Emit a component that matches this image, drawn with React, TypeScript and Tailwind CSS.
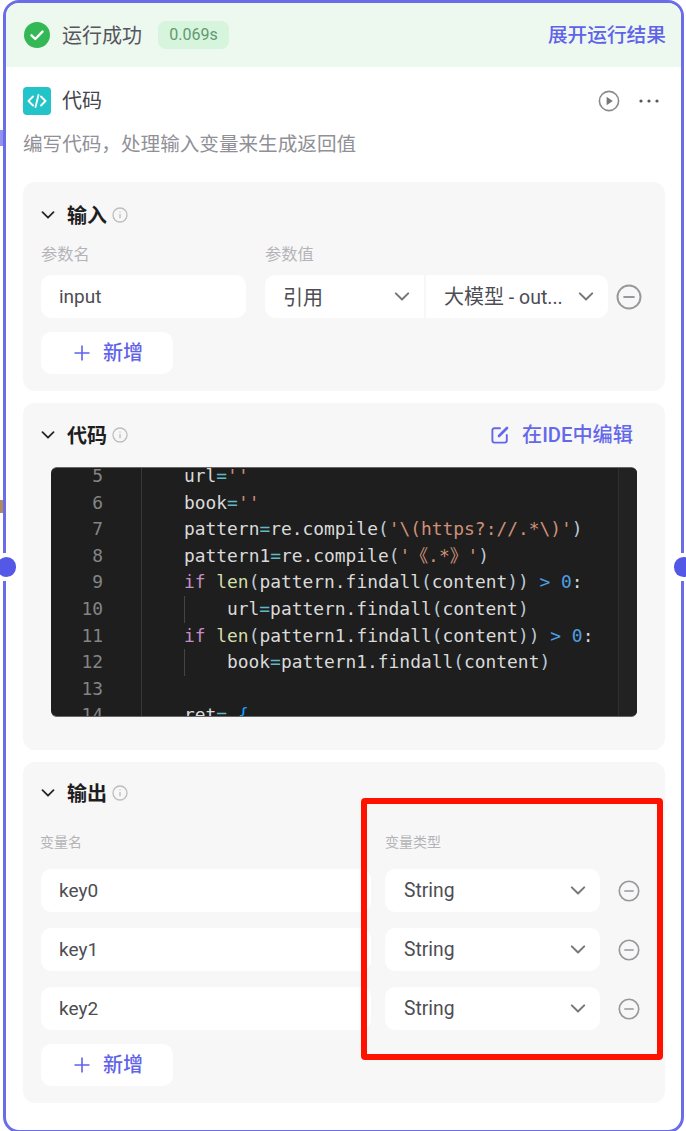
import type { ReactNode } from "react";

type Token = [string, string];

const P = "text-[#dadada]";
const O = "text-[#62b8c4]";
const K = "text-[#c58fc4]";
const L = "text-[#d5dfa8]";
const S = "text-[#ce9178]";
const R = "text-[#bcc9d6]";
const B = "text-[#179fff]";
const N = "text-[#4f9fe0]";

// tokens of each visible code line, indent is drawn as a guide
const CODE: { no: number; indent?: boolean; tokens: Token[] }[] = [
  { no: 5, tokens: [["url", P], ["=", O], ["''", S]] },
  { no: 6, tokens: [["book", P], ["=", O], ["''", S]] },
  { no: 7, tokens: [["pattern", P], ["=", O], ["re.compile", P], ["(", R], ["'\\(https?://.*\\)'", S], [")", R]] },
  { no: 8, tokens: [["pattern1", P], ["=", O], ["re.compile", P], ["(", R], ["'《.*》'", S], [")", R]] },
  { no: 9, tokens: [["if ", K], ["len", L], ["(", R], ["pattern.findall", P], ["(", R], ["content", P], ["))", R], [" > ", N], ["0", N], [":", P]] },
  { no: 10, indent: true, tokens: [["url", P], ["=", O], ["pattern.findall", P], ["(", R], ["content", P], [")", R]] },
  { no: 11, tokens: [["if ", K], ["len", L], ["(", R], ["pattern1.findall", P], ["(", R], ["content", P], ["))", R], [" > ", N], ["0", N], [":", P]] },
  { no: 12, indent: true, tokens: [["book", P], ["=", O], ["pattern1.findall", P], ["(", R], ["content", P], [")", R]] },
  { no: 13, tokens: [] },
  { no: 14, tokens: [["ret", P], ["= ", O], ["{", B]] },
];

const Chevron = ({ className }: { className: string }) => (
  <svg viewBox="0 0 14 8" className={className} fill="none" stroke="currentColor" strokeWidth="1.8" strokeLinecap="round" strokeLinejoin="round">
    <path d="M1.5 1.2 7 6.7l5.5-5.5" />
  </svg>
);

const InfoIcon = () => (
  <svg viewBox="0 0 16 16" className="w-4 h-4 text-[#bdbdbd]" fill="none" stroke="currentColor">
    <circle cx="8" cy="8" r="7" strokeWidth="1.3" />
    <path d="M8 7v4.2M8 4.4v1" strokeWidth="1.3" />
  </svg>
);

const MinusCircle = ({ size }: { size: string }) => (
  <svg viewBox="0 0 24 24" className={`${size} text-[#98989c]`} fill="none" stroke="currentColor" strokeWidth="1.8">
    <circle cx="12" cy="12" r="10.6" />
    <path d="M7.5 12h9" strokeLinecap="round" />
  </svg>
);

const PlusIcon = () => (
  <svg viewBox="0 0 16 16" className="w-4 h-4 text-[#5f63ea]" fill="none" stroke="currentColor" strokeWidth="1.6">
    <path d="M8 0.5v15M0.5 8h15" />
  </svg>
);

const AddButton = ({ className }: { className: string }) => (
  <div className={`w-[132px] h-[42px] bg-white rounded-[10px] flex items-center pl-[33px] gap-[13px] ${className}`}>
    <PlusIcon />
    <span className="text-[20px] leading-none font-medium text-[#5f63ea]">新增</span>
  </div>
);

const PanelTitle = ({ title, right }: { title: string; right?: ReactNode }) => (
  <div className="h-[28px] flex items-center">
    <Chevron className="w-[14px] h-[8px] text-[#26262b]" />
    <span className="ml-[12px] pt-[2px] text-[20px] leading-none font-semibold text-[#1d1d22]">{title}</span>
    <span className="ml-[5px]"><InfoIcon /></span>
    {right}
  </div>
);

const Field = ({ text, className }: { text: string; className: string }) => (
  <div className={`h-[43px] bg-white rounded-[10px] flex items-center pl-[18px] pt-[2px] text-[19px] text-[#4d4d54] ${className}`}>
    {text}
  </div>
);

const Select = ({ children, className }: { children: ReactNode; className: string }) => (
  <div className={`h-[43px] bg-white flex items-center justify-between pl-[18px] pr-[14px] text-[#4d4d54] ${className}`}>
    <span className="truncate pt-[2px]">{children}</span>
    <Chevron className="w-[16px] h-[9px] shrink-0 text-[#77777c]" />
  </div>
);

const OutputRow = ({ name }: { name: string }) => (
  <div className="flex items-center">
    <Field text={name} className="w-[330px]" />
    <Select className="ml-[14px] w-[215px] rounded-[10px] text-[19.3px] pl-[19px]">String</Select>
    <span className="ml-[18px]"><MinusCircle size="w-[22px] h-[22px]" /></span>
  </div>
);

const CodeBox = () => (
  <div className="ml-[10px] mt-[18px] w-[586px] h-[250px] bg-[#1e1e1e] rounded-[6px] border-y border-[#666] overflow-hidden flex font-['DejaVu_Sans_Mono','Noto_Sans_CJK_SC',monospace] text-[17.9px]">
    <div className="w-[90px] -mt-[5px] shrink-0">
      {CODE.map((line) => (
        <div key={line.no} className="h-[26.6px] leading-[26.6px] text-right pr-[38px] text-[#858585]">{line.no}</div>
      ))}
    </div>
    <div className="flex-1 border-l border-[#383838] pl-[42px] -mt-[5px] whitespace-pre">
      {CODE.map((line) => (
        <div key={line.no} className="h-[26.6px] leading-[26.6px] flex">
          {line.indent && <span className="inline-block w-[43px] border-l border-[#444]" />}
          <span>
            {line.tokens.map(([text, color], i) => (
              <span key={i} className={color}>{text}</span>
            ))}
          </span>
        </div>
      ))}
    </div>
    <div className="w-[19px] border-l border-[#2f2f2f] bg-[#222]" />
  </div>
);

export default function App() {
  return (
    <div className="relative w-[686px] h-[1131px] overflow-hidden bg-white font-['Roboto','Noto_Sans_CJK_SC',sans-serif]">
      <div className="ml-[3px] w-[681px] h-[1133px] border-[3px] border-[#6a6de8] rounded-[16px] overflow-hidden">
        {/* run status bar */}
        <div className="h-[64px] bg-[#edf8ef] flex items-center pl-[18px] pr-[15px]">
          <svg viewBox="0 0 26 26" className="w-[26px] h-[26px]">
            <circle cx="13" cy="13" r="13" fill="#33b855" />
            <path d="M7.5 13.3l3.8 3.7 7.2-7.4" fill="none" stroke="#fff" strokeWidth="2.4" strokeLinecap="round" strokeLinejoin="round" />
          </svg>
          <span className="ml-[12px] pt-[2px] text-[20px] text-[#55555c]">运行成功</span>
          <span className="ml-[16px] w-[71px] h-[28px] rounded-[8px] bg-[#d7f4dc] flex items-center justify-center text-[16px] text-[#5f9a72]">0.069s</span>
          <span className="ml-auto pt-[2px] text-[19.7px] font-medium text-[#5f63ea]">展开运行结果</span>
        </div>

        <div className="pl-[17px] pr-[16px]">
          <div className="mt-[20px] h-[28px] flex items-center">
            <svg viewBox="0 0 28 28" className="w-[28px] h-[28px]">
              <rect width="28" height="28" rx="4" fill="#22c3c9" />
              <path d="M10 9.5 5.5 14l4.5 4.5M18 9.5l4.5 4.5-4.5 4.5M15.5 8l-3 12" fill="none" stroke="#fff" strokeWidth="1.9" strokeLinecap="round" strokeLinejoin="round" />
            </svg>
            <span className="ml-[11px] text-[20px] text-[#45454c]">代码</span>
            <svg viewBox="0 0 22 22" className="ml-auto w-[22px] h-[22px]">
              <circle cx="11" cy="11" r="9.6" fill="none" stroke="#8a8a8e" strokeWidth="1.6" />
              <path d="M8.6 6.8v8.4l6.2-4.2z" fill="#77777c" />
            </svg>
            <svg viewBox="0 0 22 6" className="ml-[18px] mr-[5px] w-[22px] h-[6px]">
              <circle cx="3" cy="3" r="1.6" fill="#55555c" />
              <circle cx="11" cy="3" r="1.6" fill="#55555c" />
              <circle cx="19" cy="3" r="1.6" fill="#55555c" />
            </svg>
          </div>
          <p className="mt-[16px] h-[28px] leading-[28px] text-[19.6px] text-[#909096] whitespace-nowrap">编写代码，处理输入变量来生成返回值</p>

          {/* input */}
          <section className="mt-[23px] h-[209px] bg-[#f7f7f7] rounded-[12px] pt-[19px] pl-[18px]">
            <PanelTitle title="输入" />
            <div className="mt-[16px] h-[20px] flex items-center text-[16.3px] text-[#b4b4b8]">
              <span className="w-[224px]">参数名</span>
              <span>参数值</span>
            </div>
            <div className="mt-[10px] flex items-center">
              <Field text="input" className="w-[205px]" />
              <Select className="ml-[19px] w-[159px] rounded-l-[10px] text-[20px]">引用</Select>
              <Select className="ml-[2px] w-[182px] rounded-r-[10px] pr-[13px] text-[20px]">
                大模型<span className="text-[19.5px]"> - out...</span>
              </Select>
              <span className="ml-[8px]"><MinusCircle size="w-[26px] h-[26px]" /></span>
            </div>
            <AddButton className="mt-[14px]" />
          </section>

          {/* code */}
          <section className="mt-[12px] h-[347px] bg-[#f7f7f7] rounded-[12px] pt-[18px] pl-[18px]">
            <PanelTitle
              title="代码"
              right={
                <div className="ml-auto mr-[32px] flex items-center gap-[13px] text-[#6468ea]">
                  <svg viewBox="0 0 18 18" className="w-[18px] h-[18px]" fill="none" stroke="currentColor" strokeWidth="1.9" strokeLinecap="round" strokeLinejoin="round">
                    <path d="M9 2.2H3.4a2 2 0 0 0-2 2v10.4a2 2 0 0 0 2 2h10.4a2 2 0 0 0 2-2V9" />
                    <path d="M8 10l8-8" strokeWidth="2.6" />
                  </svg>
                  <span className="text-[20.2px] font-medium">在IDE中编辑</span>
                </div>
              }
            />
            <CodeBox />
          </section>

          {/* output */}
          <section className="mt-[12px] h-[341px] bg-[#f7f7f7] rounded-[12px] pt-[17px] pl-[18px]">
            <PanelTitle title="输出" />
            <div className="mt-[25px] h-[20px] flex items-center text-[14px] text-[#b4b4b8]">
              <span className="w-[345px] -ml-[1px]">变量名</span>
              <span>变量类型</span>
            </div>
            <div className="mt-[17px] flex flex-col gap-[16px]">
              <OutputRow name="key0" />
              <OutputRow name="key1" />
              <OutputRow name="key2" />
            </div>
            <AddButton className="mt-[14px]" />
          </section>
        </div>
      </div>

      {/* bits of the canvas showing beside the card */}
      <span className="absolute left-0 top-[130px] w-[3px] h-[16px] bg-[#8f92ee]" />
      <span className="absolute left-0 top-[500px] w-[3px] h-[13px] bg-[#b08a5a]" />

      {/* connection handles */}
      <div className="absolute left-[-3px] top-[553px] w-[19px] h-[28px] bg-white flex items-center">
        <span className="block w-[19px] h-[20px] rounded-full bg-[#5458e6]" />
      </div>
      <div className="absolute left-[674px] top-[553px] w-[19px] h-[28px] bg-white flex items-center">
        <span className="block w-[19px] h-[20px] rounded-full bg-[#5458e6]" />
      </div>

      {/* annotation */}
      <div className="absolute left-[361px] top-[798px] w-[302px] h-[262px] border-[6px] border-[#ff1100] rounded-[4px]" />
    </div>
  );
}
